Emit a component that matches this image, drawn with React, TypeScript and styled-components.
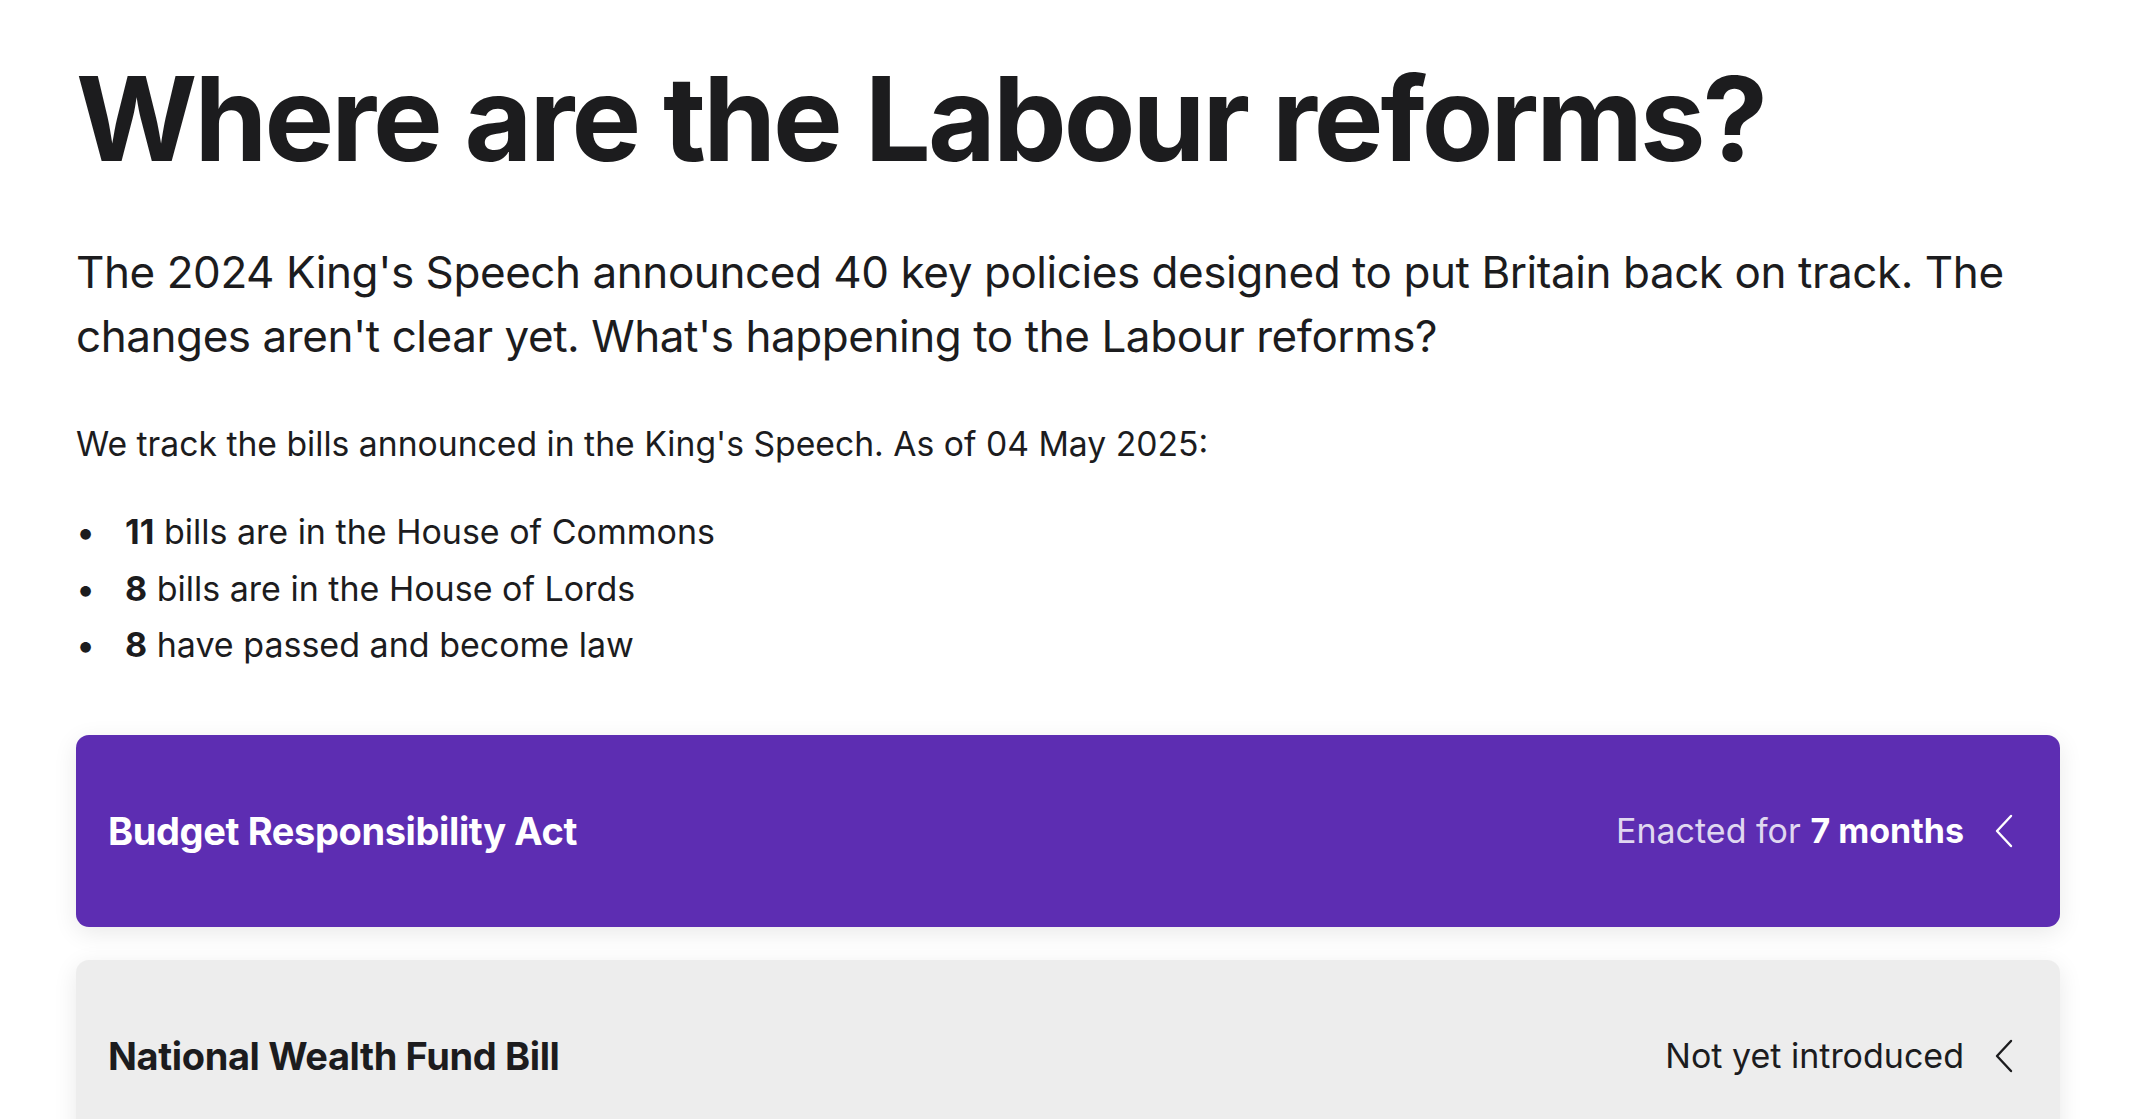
import React from "react";
import styled, { createGlobalStyle } from "styled-components";

const GlobalStyle = createGlobalStyle`
  html, body {
    margin: 0;
    padding: 0;
    background: #ffffff;
  }
  body {
    font-family: Inter, "Noto Sans", "Liberation Sans", sans-serif;
    color: #1c1c1e;
  }
  * { box-sizing: border-box; }
`;

const Page = styled.main`
  padding: 0 71px 0 76px;
`;

const Title = styled.h1`
  margin: 0;
  padding-top: 49px;
  font-size: 117px;
  line-height: 1.2;
  font-weight: 700;
  letter-spacing: -0.025em;
  color: #1c1c1e;
`;

const Lead = styled.p`
  margin: 51px 0 0;
  font-size: 44px;
  line-height: 64px;
  font-weight: 400;
  letter-spacing: -0.01em;
`;

const Intro = styled.p`
  margin: 52px 0 0;
  font-size: 33.7px;
  line-height: 48px;
`;

const Stats = styled.ul`
  margin: 36px 0 0;
  padding: 0;
  list-style: none;
  font-size: 34px;
  line-height: 56.5px;
`;

const Stat = styled.li`
  display: flex;
  &::before {
    content: "•";
    width: 49px;
    flex-shrink: 0;
  }
`;

const StatText = styled.span``;

const Num = styled.strong`
  font-weight: 700;
`;

const Bills = styled.div`
  margin-top: 61px;
  display: flex;
  flex-direction: column;
  gap: 33px;
`;

const Card = styled.div<{ $enacted?: boolean }>`
  height: 192px;
  border-radius: 13px;
  display: flex;
  align-items: center;
  justify-content: space-between;
  padding: 0 46px 0 32px;
  background: ${(p) => (p.$enacted ? "#5d2db2" : "#ededed")};
  color: ${(p) => (p.$enacted ? "#ffffff" : "#1c1c1e")};
  box-shadow: 0 6px 24px rgba(0, 0, 0, 0.09);
`;

const BillName = styled.h2`
  margin: 0;
  font-size: 38px;
  font-weight: 700;
  letter-spacing: -0.01em;
`;

const Status = styled.div<{ $enacted?: boolean }>`
  display: flex;
  align-items: center;
  gap: 30px;
  font-size: 34px;
  color: ${(p) => (p.$enacted ? "rgba(255,255,255,0.82)" : "#1c1c1e")};
`;

const Strong = styled.strong`
  font-weight: 700;
  color: #ffffff;
`;

const Chevron = () => (
  <svg width="20" height="34" viewBox="0 0 20 34" fill="none">
    <path d="M17 2 L3 17 L17 32" stroke="currentColor" strokeWidth="2.4" strokeLinecap="round" strokeLinejoin="round" />
  </svg>
);

const ChevronWrap = styled.span<{ $enacted?: boolean }>`
  display: flex;
  color: ${(p) => (p.$enacted ? "#ffffff" : "#1c1c1e")};
`;

export default function App() {
  return (
    <>
      <GlobalStyle />
      <Page>
        <Title>Where are the Labour reforms?</Title>
        <Lead>
          The 2024 King's Speech announced 40 key policies designed to put Britain back on track. The changes aren't
          clear yet. What's happening to the Labour reforms?
        </Lead>
        <Intro>We track the bills announced in the King's Speech. As of 04 May 2025:</Intro>
        <Stats>
          <Stat>
            <StatText>
              <Num>11</Num> bills are in the House of Commons
            </StatText>
          </Stat>
          <Stat>
            <StatText>
              <Num>8</Num> bills are in the House of Lords
            </StatText>
          </Stat>
          <Stat>
            <StatText>
              <Num>8</Num> have passed and become law
            </StatText>
          </Stat>
        </Stats>
        <Bills>
          <Card $enacted>
            <BillName>Budget Responsibility Act</BillName>
            <Status $enacted>
              <span>
                Enacted for <Strong>7 months</Strong>
              </span>
              <ChevronWrap $enacted>
                <Chevron />
              </ChevronWrap>
            </Status>
          </Card>
          <Card>
            <BillName>National Wealth Fund Bill</BillName>
            <Status>
              <span>Not yet introduced</span>
              <ChevronWrap>
                <Chevron />
              </ChevronWrap>
            </Status>
          </Card>
        </Bills>
      </Page>
    </>
  );
}
